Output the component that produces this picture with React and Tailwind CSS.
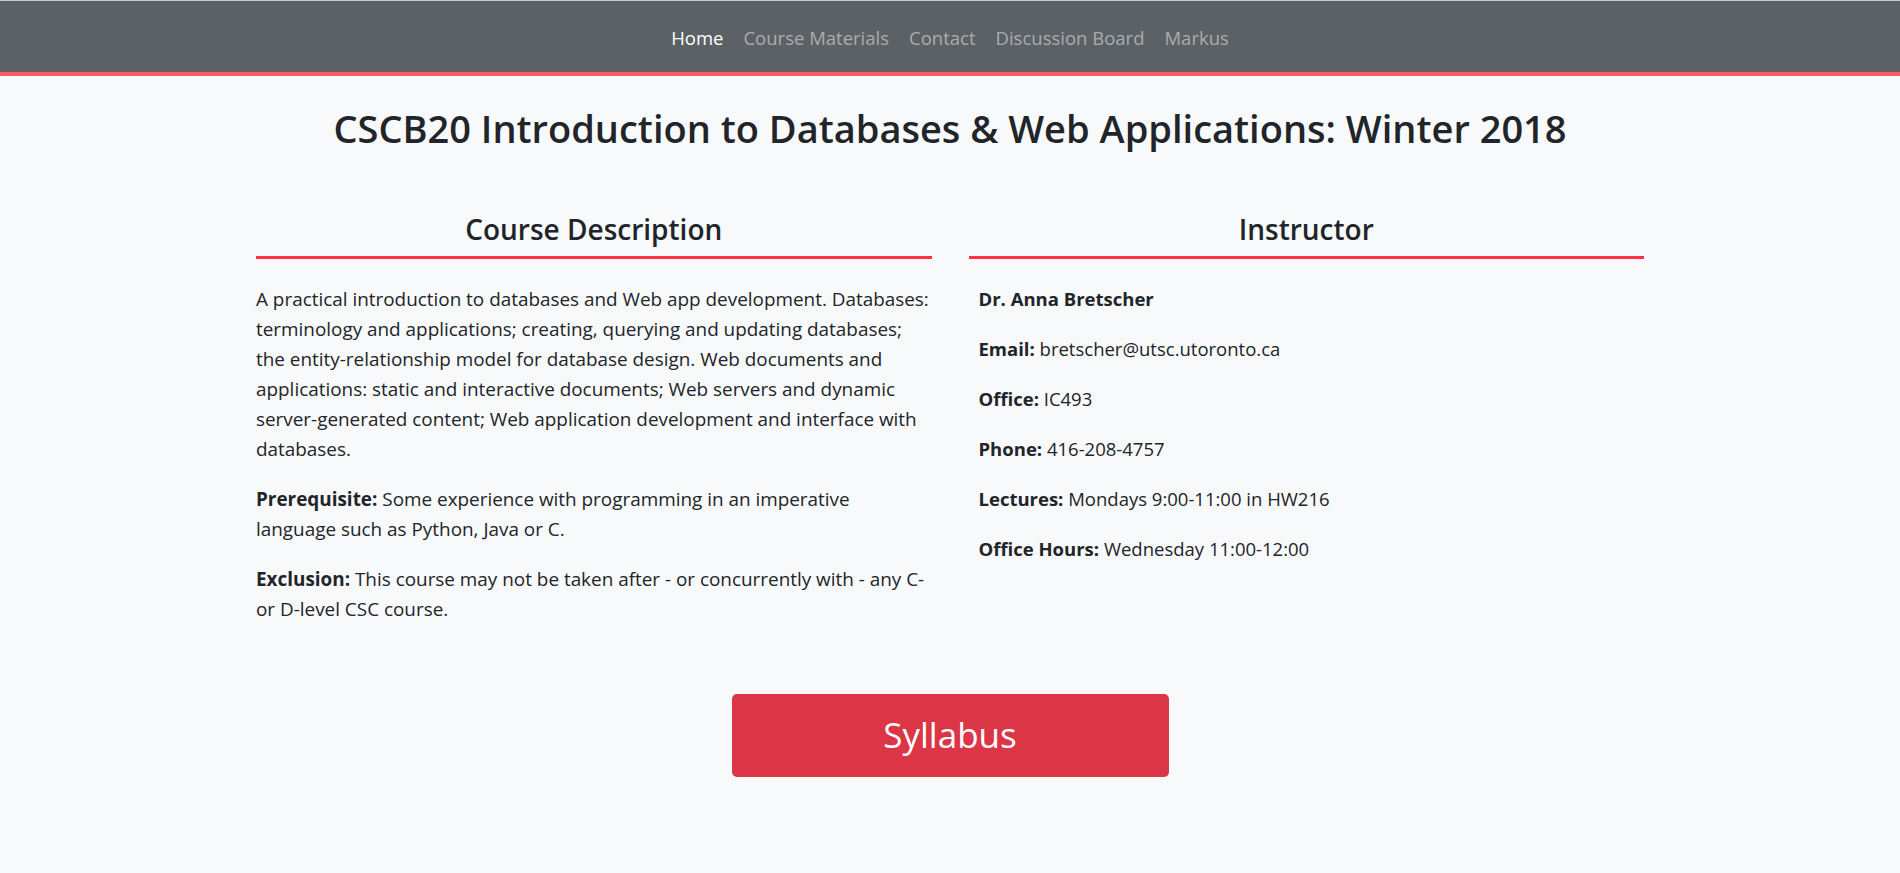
import React from 'react';

const links = ['Home', 'Course Materials', 'Contact', 'Discussion Board', 'Markus'];

const instructor = [
  ['Email:', 'bretscher@utsc.utoronto.ca'],
  ['Office:', 'IC493'],
  ['Phone:', '416-208-4757'],
  ['Lectures:', 'Mondays 9:00-11:00 in HW216'],
  ['Office Hours:', 'Wednesday 11:00-12:00'],
];

export default function App() {
  return (
    <div
      className="min-h-screen bg-[#f8f9fa] text-[#212529] border-t border-[#c8cacc]"
      style={{ fontFamily: '"Open Sans", "Noto Sans", sans-serif' }}
    >
      {/* Navbar */}
      <nav className="h-[75px] bg-[#5c6166] border-b-4 border-[#ff5a64] flex items-center justify-center gap-[20px] text-[18.5px] pt-[2px]">
        {links.map((l, i) => (
          <a key={l} href="#" className={i === 0 ? 'text-white' : 'text-[#a9acaf]'}>
            {l}
          </a>
        ))}
      </nav>

      <h1 className="mt-[28px] text-center text-[38px] leading-[48px] font-semibold">
        CSCB20 Introduction to Databases &amp; Web Applications: Winter 2018
      </h1>

      <div className="mx-[256px] mt-[60px] grid grid-cols-2 gap-[37px]">
        {/* Course Description */}
        <section>
          <h3 className="text-center text-[28px] leading-[34px] font-semibold pb-[10px] border-b-[3px] border-[#ff3344]">
            Course Description
          </h3>
          <div className="mt-[25px] mr-[-2px] text-[18.9px] leading-[30px] space-y-[20px]">
            <p>
              A practical introduction to databases and Web app development. Databases: terminology and
              applications; creating, querying and updating databases; the entity-relationship model for
              database design. Web documents and applications: static and interactive documents; Web servers
              and dynamic server-generated content; Web application development and interface with databases.
            </p>
            <p>
              <b>Prerequisite:</b> Some experience with programming in an imperative language such as Python,
              Java or C.
            </p>
            <p>
              <b>Exclusion:</b> This course may not be taken after - or concurrently with - any C- or D-level
              CSC course.
            </p>
          </div>
        </section>

        {/* Instructor */}
        <section>
          <h3 className="text-center text-[28px] leading-[34px] font-semibold pb-[10px] border-b-[3px] border-[#ff3344]">
            Instructor
          </h3>
          <div className="mt-[25px] px-[10px] text-[18.5px] leading-[30px] space-y-[20px]">
            <p>
              <b>Dr. Anna Bretscher</b>
            </p>
            {instructor.map(([k, v]) => (
              <p key={k}>
                <b>{k}</b> {v}
              </p>
            ))}
          </div>
        </section>
      </div>

      <div className="flex justify-center mt-[70px] pb-[96px]">
        <a
          href="#"
          className="w-[437px] h-[83px] rounded-[5px] bg-[#dc3545] text-white text-[35px] flex items-center justify-center"
        >
          Syllabus
        </a>
      </div>
    </div>
  );
}
